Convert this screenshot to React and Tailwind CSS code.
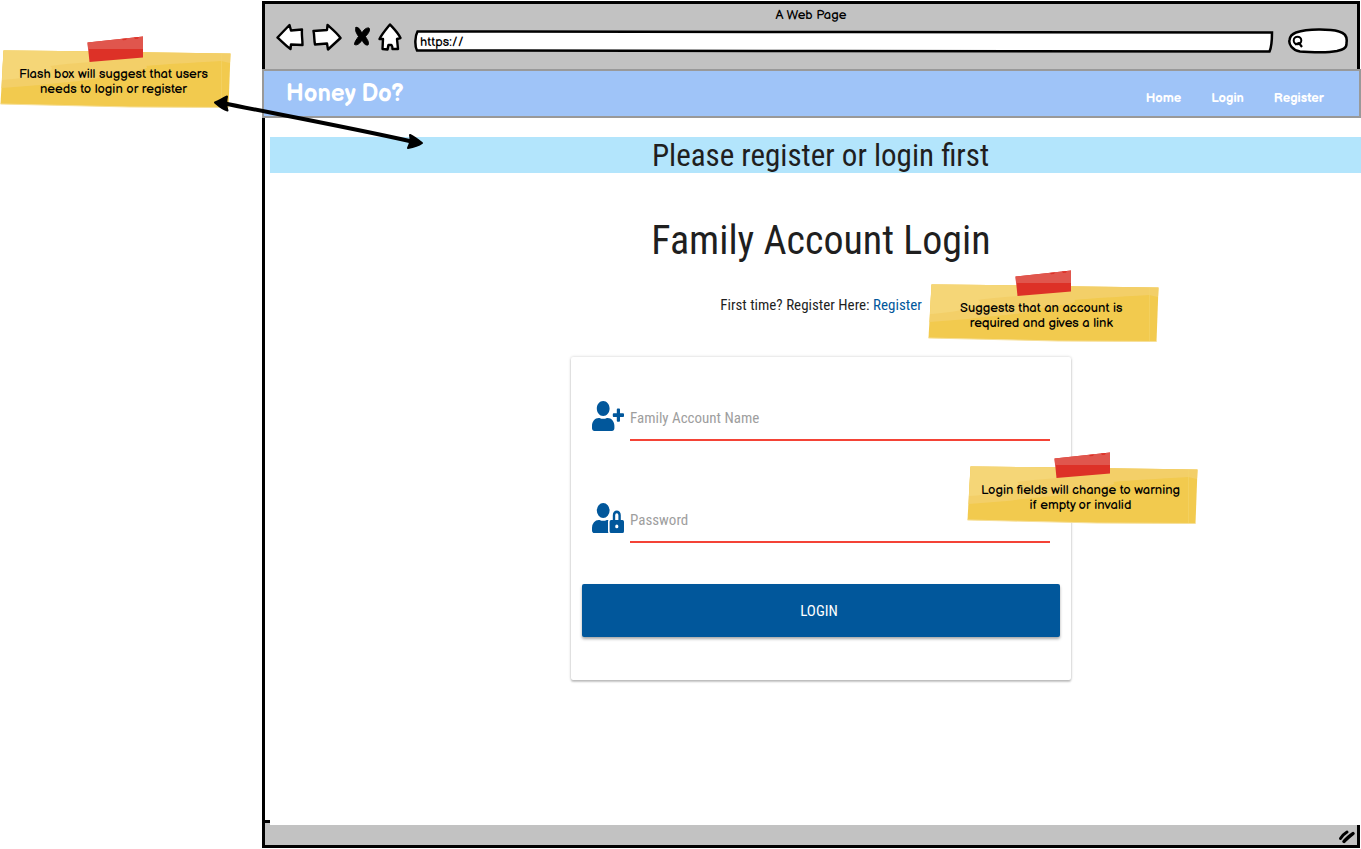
import { FaUserLock, FaUserPlus } from "react-icons/fa";

function StickyNote({ children }) {
  return (
    <div className="relative h-[72px] w-[231px] font-['Balsamiq_Sans','Lato',sans-serif] text-[13px] leading-[15px] text-black">
      <svg className="absolute inset-0" width="231" height="72" viewBox="0 0 231 72" aria-hidden="true">
        <path d="M3.5 14.5 L60 15 L230.500 17.5 L228.500 71.5 L130 71 L0.5 68 Z" fill="#f2ca4e" />
        <path d="M3.5 14.5 L60 15 L230.500 17.5 L230 27 L221 25 C190 27 165 28 146 30 C154 34 120 36 100 40 C105 44 60 46 40 49 L1.5 52 Z" fill="#f3cf68" />
        <path d="M3.5 14.5 L60 15 L110 16 C150 19 140 22 118 23 C100 26 70 27 50 30 C60 36 30 42 2 44 Z" fill="#f5d677" />
        <path d="M0.5 68 L130 71 L228.500 71.5" fill="none" stroke="#f6df98" />
        <path d="M221.5 18V71" stroke="#f4d36c" strokeWidth=".6" />
        <path d="M87.500 6.500 L143 0.500 L143 21.500 L89.500 26 Z" fill="#dd3127" />
        <path d="M87.500 6.500 L143 0.500 L143 13 L88 13 Z" fill="#e0564d" />
        <path d="M122 3 l5 -.5 l-1 1.500 l-3 .3z M134 1.600 l5 -.5 l-1 1.700 l-3 .3z" fill="#dd3127" />
      </svg>
      <p className="relative pr-1 pt-[31px] text-center">{children}</p>
    </div>
  );
}

function ToolButton({ label, className, viewBox, children }) {
  return (
    <button type="button" aria-label={label} className={className}>
      <svg className="h-7 w-full" viewBox={viewBox} fill="white" stroke="black" strokeWidth="2.400" strokeLinejoin="round" strokeLinecap="round" aria-hidden="true">
        {children}
      </svg>
    </button>
  );
}

function BrowserBar() {
  return (
    <header className="mr-px border-x-[3px] border-t-[3px] border-black bg-[#c2c2c2] font-['Balsamiq_Sans','Lato',sans-serif] text-[13px] text-black">
      <p className="pt-[3px] text-center leading-4">A Web Page</p>
      <div className="flex h-[46px] items-start pl-[11px] pr-[9px]">
        <ToolButton label="Back" className="w-7" viewBox="0 0 28 28">
          <path d="M1.500 14.500 L13.500 2 L15 7.500 L26 6.500 C25.500 12 26.500 16 26.500 22 L15 21.500 L14.500 26 C9 22 6 18.500 1.500 14.500 Z" />
        </ToolButton>
        <ToolButton label="Forward" className="ml-2 w-[30px]" viewBox="0 0 30 28">
          <path d="M1.500 8 L15 7 L15.500 2 C20 6 25 10 28.500 15 L16 26.500 L15 20.500 L3 21.500 C2 17 2.500 12 1.500 8 Z" />
        </ToolButton>
        <ToolButton label="Stop" className="ml-[11px] w-[18px]" viewBox="0 0 18 28">
          <path d="M3 4.500 C6 3.500 7 7.500 9 10 C10.500 7 13 4.500 16 5 C17.500 7.500 15 11 12.500 13.500 C14 16.500 16.500 19 15 22 C11.500 22.500 10.500 19.500 9 17 C7.500 19.500 4.500 23 1.500 21.500 C1.500 18.500 4 16 5.500 13.500 C4 11 1.500 7.500 3 4.500 Z" fill="black" strokeWidth="1" />
        </ToolButton>
        <ToolButton label="Home" className="ml-[7px] w-6" viewBox="0 0 24 28">
          <path d="M12 1.500 C15.500 5.500 19.500 9 22.500 15 L19 16 L20 26 L14.500 26 C14.500 24.500 14 22.500 13.500 22 L10.500 22 C10 23.500 10 25 9.500 26.500 L4.500 26 L5 16 L1.500 16 C4 11 7.500 7 12 1.500 Z" />
        </ToolButton>
        <div className="relative ml-[12px] mt-[7px] h-6 flex-1">
          <svg className="absolute inset-0 h-full w-full" viewBox="0 0 860 24" preserveAspectRatio="none" aria-hidden="true">
            <path d="M3.500 1.500 L430 2 L858 2.500 C858 9 858 16 855.500 21.500 L400 21 L3 20.500 C0.500 16 1 6 3.500 1.500 Z" fill="white" stroke="black" strokeWidth="2.500" vectorEffect="non-scaling-stroke" />
          </svg>
          <input aria-label="Address" defaultValue="https://" className="relative h-6 w-full bg-transparent pl-[6px] outline-none" />
        </div>
        <div className="relative ml-[14px] mt-[5px] h-[26px] w-[60px]">
          <svg className="absolute inset-0" width="60" height="26" viewBox="0 0 60 26" fill="none" stroke="black" aria-hidden="true">
            <path d="M8 4.500 C20 0.500 42 1 51 3.500 C57 5 59.500 9 58.500 15 C59 21 53 22 49 23 C36 25.500 26 24 12 23.500 C4 22 0.500 16 1.500 12 C2 8 4 6 8 4.500 Z" fill="white" strokeWidth="2.500" />
            <circle cx="9.500" cy="12.500" r="3.800" strokeWidth="2" />
            <path d="M7 16.500 L11 15 L14 19" strokeWidth="2.200" />
          </svg>
          <input type="search" aria-label="Search" className="relative h-full w-full bg-transparent pl-5 pr-2 outline-none" />
        </div>
      </div>
    </header>
  );
}

function Field({ type, label, Icon }) {
  return (
    <label className="flex items-start gap-[6px]">
      <Icon className="mt-1 h-[30px] w-8 text-[#01579b]" preserveAspectRatio="none" aria-hidden="true" />
      <input type={type} aria-label={label} placeholder={label} className="h-11 min-w-0 flex-1 border-b-2 border-[#f44336] text-[15px] outline-none placeholder:text-[#9e9e9e]" />
    </label>
  );
}

export default function App() {
  return (
    <div className="relative flex min-h-screen bg-white pb-px">
      <aside className="w-[262px] shrink-0 pt-9">
        <StickyNote>
          Flash box will suggest that users
          <br />
          needs to login or register
        </StickyNote>
      </aside>

      <div className="flex min-w-0 flex-1 flex-col pt-px">
        <BrowserBar />
        <nav className="flex h-[49px] items-center justify-between border-2 border-[#999] bg-[#9fc4f8] pl-[22px] pr-[35px] font-['Balsamiq_Sans','Lato',sans-serif] font-bold text-white">
          <a href="#home" className="text-2xl leading-none">Honey Do?</a>
          <div className="flex gap-[30px] pt-[10px] text-[13px]">
            <a href="#home">Home</a>
            <a href="#login">Login</a>
            <a href="#register">Register</a>
          </div>
        </nav>

        <main className="flex flex-1 flex-col border-l-[3px] border-black font-['Roboto_Condensed','Roboto',sans-serif] text-[#1f1f1f]">
          <p className="ml-[5px] mt-[19px] h-9 bg-[#b3e5fc] pl-[10px] text-center text-[31px] leading-[38px]">Please register or login first</p>
          <div className="flex flex-col items-center pl-4">
            <h1 className="mt-[43px] text-[40px] leading-[50px]">Family Account Login</h1>
            <div className="relative mt-[29px]">
              <p className="text-[15px] leading-5">
                First time? Register Here: <a href="#register" className="text-[#01579b]">Register</a>
              </p>
              <div className="absolute -top-[25px] left-full ml-[6px]">
                <StickyNote>
                  Suggests that an account is
                  <br />
                  required and gives a link
                </StickyNote>
              </div>
            </div>
            <form className="relative mt-[42px] w-[500px] rounded-xs px-[11px] pb-[43px] pt-10 shadow-[0_2px_2px_rgba(0,0,0,0.2),0_0_3px_rgba(0,0,0,0.22)]" onSubmit={(e) => e.preventDefault()}>
              <div className="flex flex-col gap-[58px] px-[10px]">
                <Field type="text" label="Family Account Name" Icon={FaUserPlus} />
                <Field type="password" label="Password" Icon={FaUserLock} />
              </div>
              <button type="submit" className="mt-[41px] h-[53px] w-full rounded-xs bg-[#01579b] pr-1 pt-[2px] text-[15px] text-white shadow-[0_2px_3px_rgba(0,0,0,0.35)]">LOGIN</button>
              <div className="absolute left-[396px] top-[95px]">
                <StickyNote>
                  Login fields will change to warning
                  <br />
                  if empty or invalid
                </StickyNote>
              </div>
            </form>
          </div>
          <div className="mt-auto h-[5px] w-[5px] border-t-[3px] border-black bg-[#c2c2c2]" />
        </main>

        <footer className="mr-px flex h-[23px] justify-end border-x-[3px] border-b-[3px] border-black bg-[#c2c2c2]">
          <svg className="mt-1" width="19" height="16" viewBox="0 0 19 16" fill="none" stroke="black" strokeLinecap="round" aria-hidden="true">
            <path d="M2.500 9.500 C4 7 6.500 4.500 9 3" strokeWidth="3" />
            <path d="M6 12.500 C8 10 12 7 15 4.500" strokeWidth="3.500" />
          </svg>
        </footer>
      </div>

      <svg className="pointer-events-none absolute left-[212px] top-[94px]" width="214" height="60" viewBox="0 0 214 60" fill="black" stroke="black" strokeLinejoin="round" aria-hidden="true">
        <path d="M10 9 C70 21 140 34 202 48" fill="none" strokeWidth="4" />
        <path d="M3 8.500 C7 7 11 4 15 2.500 C14 7 14 12 15.500 16.500 C10 15 7 12 3 8.500 Z" strokeWidth="2" />
        <path d="M210 49 C206 46 202 43 198 41 C199 45 198 50 196 54 C202 53 206 52 210 49 Z" strokeWidth="2" />
      </svg>
    </div>
  );
}
